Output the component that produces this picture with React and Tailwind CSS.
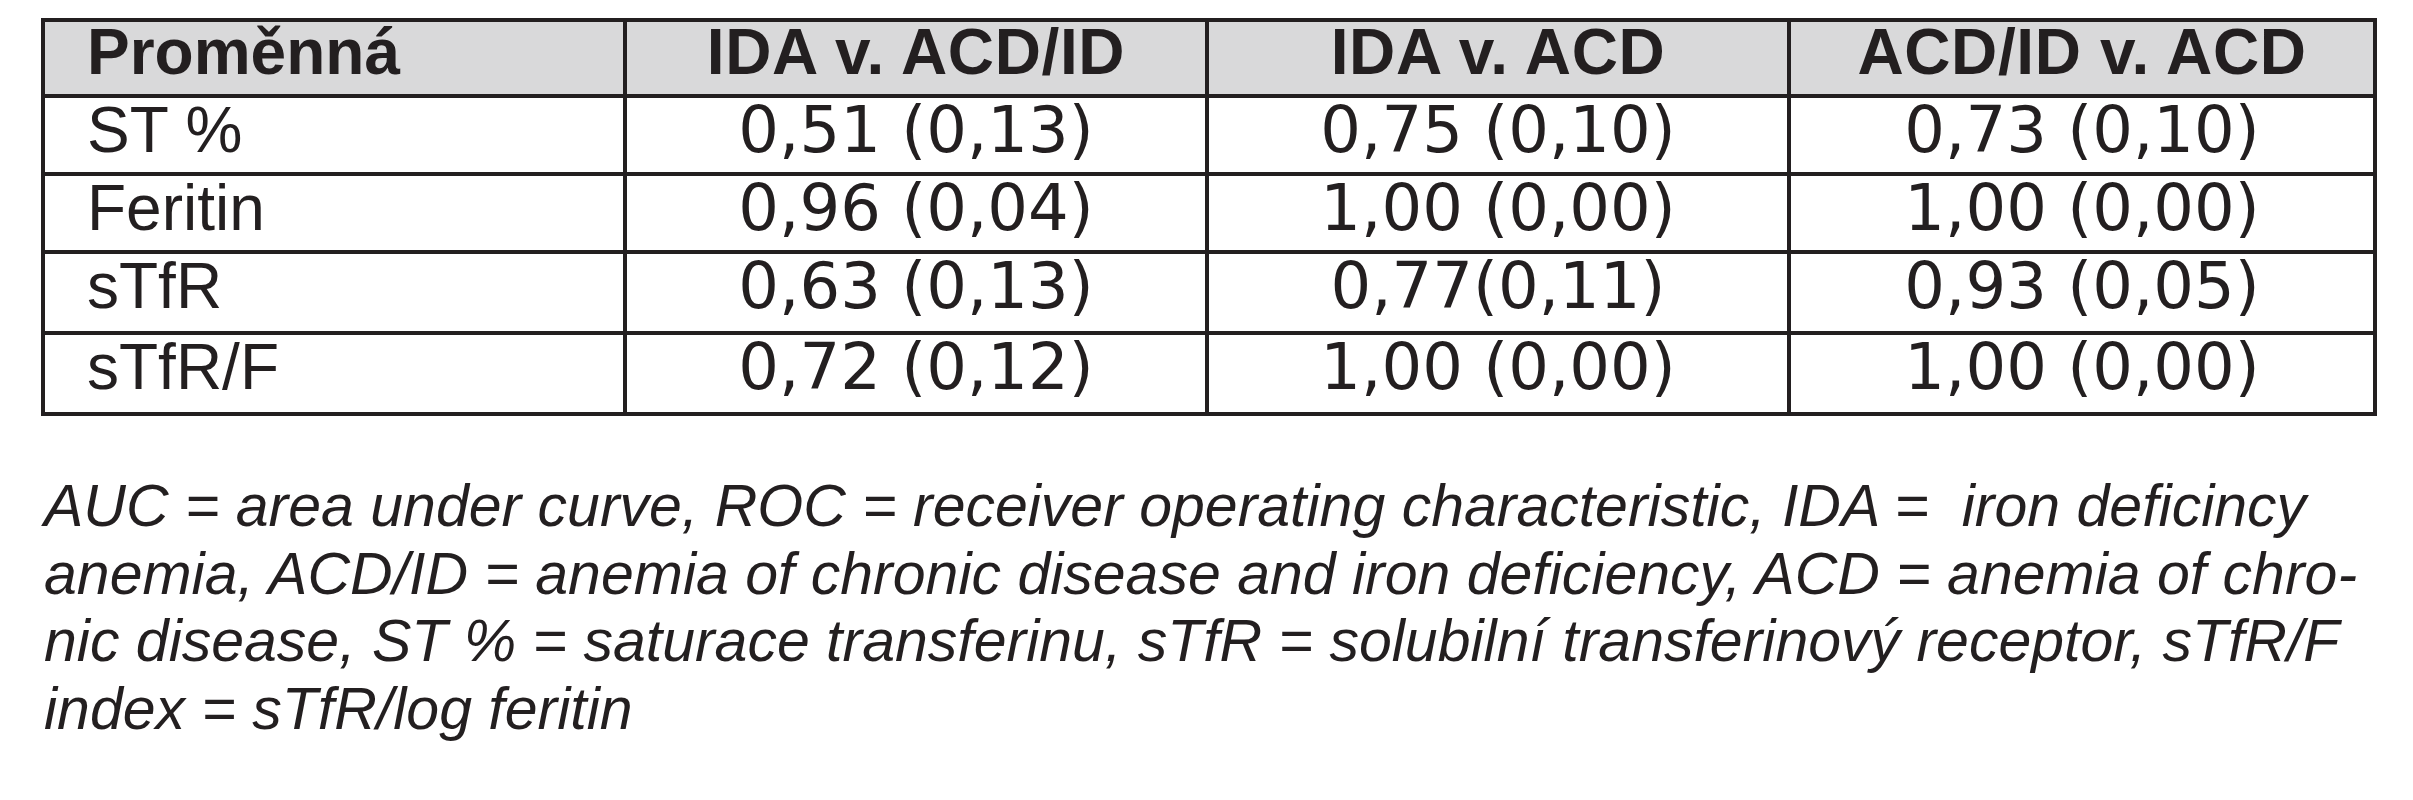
const headers = ['Proměnná', 'IDA v. ACD/ID', 'IDA v. ACD', 'ACD/ID v. ACD'];

const rows = [
  ['ST %', '0,51 (0,13)', '0,75 (0,10)', '0,73 (0,10)'],
  ['Feritin', '0,96 (0,04)', '1,00 (0,00)', '1,00 (0,00)'],
  ['sTfR', '0,63 (0,13)', '0,77(0,11)', '0,93 (0,05)'],
  ['sTfR/F', '0,72 (0,12)', '1,00 (0,00)', '1,00 (0,00)'],
];

const rowHeights = ['h-[78px]', 'h-[78px]', 'h-[81px]', 'h-[77px]'];

const App = () => {
  return (
    <div className="w-[2413px] h-[800px] bg-white text-[#231f20] pt-[18px] pl-[41px] font-['Liberation_Sans',Arial,sans-serif]">
      <div className="w-[2336px] grid grid-cols-4 border-4 border-[#231f20]">
        {headers.map((h, i) => (
          <div
            key={h}
            className={`h-[76px] bg-[#d9d9da] border-b-4 border-[#231f20] text-[64px] leading-[60px] font-bold ${
              i === 0 ? 'pl-[42px] text-left' : 'text-center tracking-[0.01em]'
            } ${i < 3 ? 'border-r-4' : ''}`}
          >
            {h}
          </div>
        ))}
        {rows.map((row, r) =>
          row.map((cell, c) => (
            <div
              key={`${r}-${c}`}
              className={`${rowHeights[r]} border-[#231f20] text-[64px] leading-[64px] ${
                r < 3 ? 'border-b-4' : ''
              } ${c < 3 ? 'border-r-4' : ''} ${
                c === 0
                  ? 'pl-[42px] text-left'
                  : "text-center font-['DejaVu_Sans',sans-serif]"
              }`}
            >
              {cell}
            </div>
          ))
        )}
      </div>

      {/* legenda */}
      <p className="mt-[57px] pl-[3px] italic text-[59px] leading-[67.5px] whitespace-nowrap">
        AUC = area under curve, ROC = receiver operating characteristic, IDA =&nbsp; iron deficincy
        <br />
        anemia, ACD/ID = anemia of chronic disease and iron deficiency, ACD = anemia of chro-
        <br />
        nic disease, ST % = saturace transferinu, sTfR = solubilní transferinový receptor, sTfR/F
        <br />
        index = sTfR/log feritin
      </p>
    </div>
  );
};

export default App;
